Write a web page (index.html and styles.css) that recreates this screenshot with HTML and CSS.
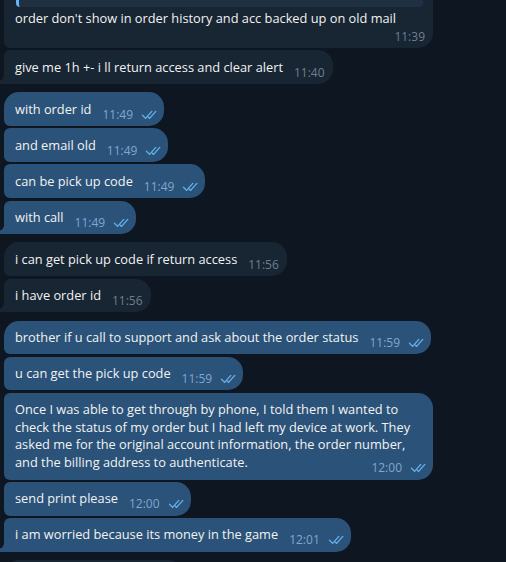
FILE: index.html
```html
<!DOCTYPE html>
<html lang="en">
<head>
<meta charset="utf-8">
<title>Chat</title>
<link rel="stylesheet" href="styles.css">
</head>
<body>
<div class="chat">
  <div class="group in">
    <div class="msg">
      <div class="reply">
        <div class="reply-name">Support</div>
        <div class="reply-text">which alert have ?</div>
      </div>
      <span class="text">order don't show in order history and acc backed up on old mail</span><span class="meta below"><span class="time">11:39</span></span>
    </div>
    <div class="msg"><span class="text">give me 1h +- i ll return access and clear alert</span><span class="meta"><span class="time">11:40</span></span></div>
  </div>

  <div class="group out">
    <div class="msg"><span class="text">with order id</span><span class="meta"><span class="time">11:49</span><svg class="ticks" viewBox="0 0 18 10"><path d="M1.5 5.2 4.6 8.4 10.8 1.4M7.4 7.2 8.6 8.4 14.8 1.4"/></svg></span></div>
    <div class="msg"><span class="text">and email old</span><span class="meta"><span class="time">11:49</span><svg class="ticks" viewBox="0 0 18 10"><path d="M1.5 5.2 4.6 8.4 10.8 1.4M7.4 7.2 8.6 8.4 14.8 1.4"/></svg></span></div>
    <div class="msg"><span class="text">can be pick up code</span><span class="meta"><span class="time">11:49</span><svg class="ticks" viewBox="0 0 18 10"><path d="M1.5 5.2 4.6 8.4 10.8 1.4M7.4 7.2 8.6 8.4 14.8 1.4"/></svg></span></div>
    <div class="msg"><span class="text">with call</span><span class="meta"><span class="time">11:49</span><svg class="ticks" viewBox="0 0 18 10"><path d="M1.5 5.2 4.6 8.4 10.8 1.4M7.4 7.2 8.6 8.4 14.8 1.4"/></svg></span></div>
  </div>

  <div class="group in">
    <div class="msg"><span class="text">i can get pick up code if return access</span><span class="meta"><span class="time">11:56</span></span></div>
    <div class="msg"><span class="text">i have order id</span><span class="meta"><span class="time">11:56</span></span></div>
  </div>

  <div class="group out">
    <div class="msg"><span class="text">brother if u call to support and ask about the order status</span><span class="meta"><span class="time">11:59</span><svg class="ticks" viewBox="0 0 18 10"><path d="M1.5 5.2 4.6 8.4 10.8 1.4M7.4 7.2 8.6 8.4 14.8 1.4"/></svg></span></div>
    <div class="msg"><span class="text">u can get the pick up code</span><span class="meta"><span class="time">11:59</span><svg class="ticks" viewBox="0 0 18 10"><path d="M1.5 5.2 4.6 8.4 10.8 1.4M7.4 7.2 8.6 8.4 14.8 1.4"/></svg></span></div>
    <div class="msg"><span class="text">Once I was able to get through by phone, I told them I wanted to check the status of my order but I had left my device at work. They asked me for the original account information, the order number, and the billing address to authenticate.</span><span class="meta"><span class="time">12:00</span><svg class="ticks" viewBox="0 0 18 10"><path d="M1.5 5.2 4.6 8.4 10.8 1.4M7.4 7.2 8.6 8.4 14.8 1.4"/></svg></span></div>
    <div class="msg"><span class="text">send print please</span><span class="meta"><span class="time">12:00</span><svg class="ticks" viewBox="0 0 18 10"><path d="M1.5 5.2 4.6 8.4 10.8 1.4M7.4 7.2 8.6 8.4 14.8 1.4"/></svg></span></div>
    <div class="msg"><span class="text">i am worried because its money in the game</span><span class="meta"><span class="time">12:01</span><svg class="ticks" viewBox="0 0 18 10"><path d="M1.5 5.2 4.6 8.4 10.8 1.4M7.4 7.2 8.6 8.4 14.8 1.4"/></svg></span></div>
  </div>

  <div class="group in">
    <div class="msg stub"></div>
  </div>
</div>
</body>
</html>
```

FILE: styles.css
```css
* { box-sizing: border-box; }

html, body {
  margin: 0;
  height: 562px;
  overflow: hidden;
  background: #0e1621;
}

body {
  font-family: "Open Sans", "Noto Sans", sans-serif;
  color: #f2f2f2;
}

.chat {
  display: flex;
  flex-direction: column;
  gap: 8.3px;
  padding-left: 4px;
  margin-top: -40.3px;
}

.group {
  display: flex;
  flex-direction: column;
  align-items: flex-start;
  gap: 2.4px;
}

.in { --bubble: #182533; --time: #6d7f8f; }
.out { --bubble: #2b5278; --time: #7da8d3; }

.msg {
  position: relative;
  display: flow-root;
  max-width: 429px;
  padding: 8.3px 8px 7.7px 11px;
  border-radius: 15px;
  background: var(--bubble);
  font-size: 12.8px;
  line-height: 17.7px;
}

.out .msg { padding-right: 5px; }

.group .msg:not(:first-child) { border-top-left-radius: 6px; }
.group .msg:not(:last-child) { border-bottom-left-radius: 6px; }
.group .msg:last-child:not(:first-child) { border-bottom-left-radius: 0; }

.group .msg:last-child:not(:first-child)::before {
  content: "";
  position: absolute;
  left: -6px;
  bottom: 0;
  width: 6px;
  height: 9px;
  background: radial-gradient(circle at 0 0, transparent 5.6px, var(--bubble) 6.2px);
}

.reply {
  margin: 0 2px 2.5px 1px;
  padding: 3px 8px 4px 8px;
  border-left: 3px solid #6ab3f3;
  border-radius: 4px;
  background: #1f3043;
  font-size: 12.8px;
  line-height: 16px;
}

.reply-name { color: #6ab3f3; font-weight: 600; }
.reply-text { color: #f2f2f2; }

.meta {
  float: right;
  display: flex;
  align-items: center;
  height: 14px;
  margin: 7px 0 -4px 11px;
  font-size: 12px;
  line-height: 14px;
  color: var(--time);
}

.meta.below { margin-top: 3px; }

.ticks {
  width: 18px;
  height: 10px;
  margin-left: 8px;
  fill: none;
  stroke: #64b0ea;
  stroke-width: 1.35;
  stroke-linecap: round;
  stroke-linejoin: round;
}

.stub {
  width: 179px;
  height: 34px;
}
```
